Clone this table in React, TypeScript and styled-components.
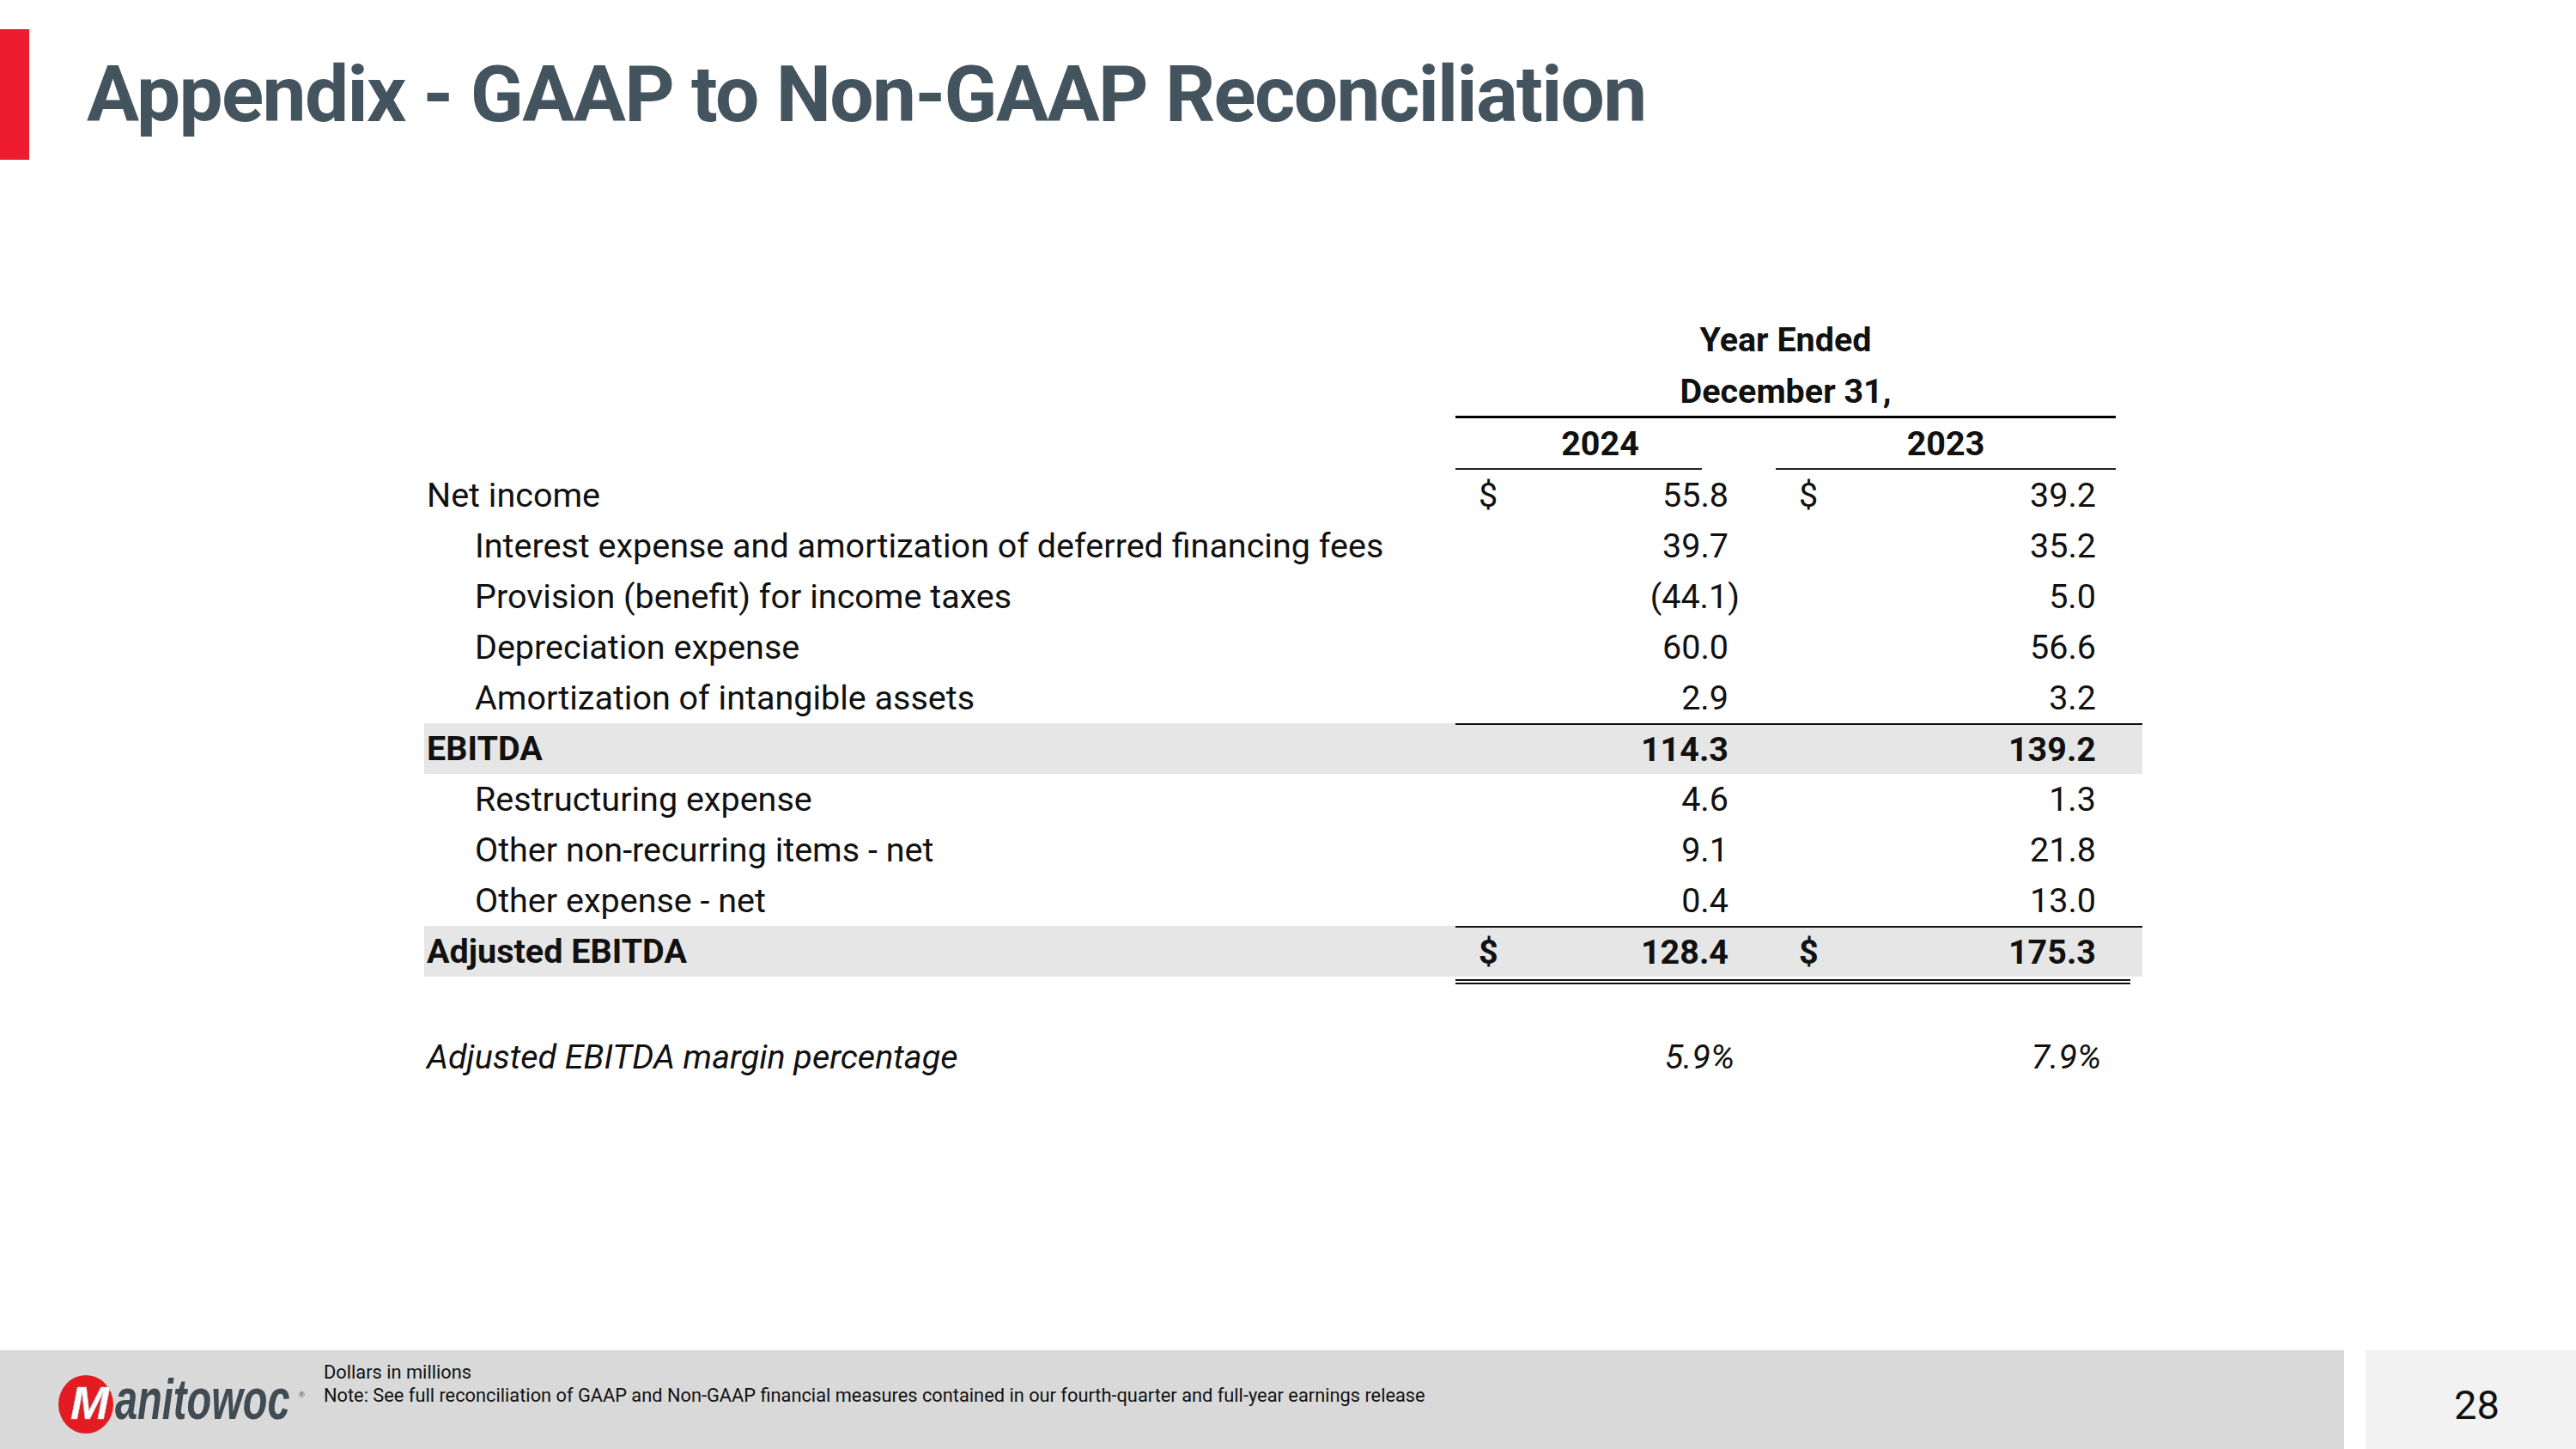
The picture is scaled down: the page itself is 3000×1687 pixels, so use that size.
import styled, {createGlobalStyle} from "styled-components";

const GlobalStyle = createGlobalStyle`
    html, body {
        margin: 0;
        padding: 0;
        background: #ffffff;
    }
`

const Slide = styled.div`
    width: 3000px;
    height: 1687px;
    display: flex;
    flex-direction: column;
    background: #ffffff;
    overflow: hidden;
    font-family: Roboto, "Liberation Sans", sans-serif;
`

const Header = styled.header`
    display: flex;
    align-items: center;
    height: 152px;
    margin-top: 34px;
`

const Accent = styled.div`
    width: 34px;
    align-self: stretch;
    background: #ed1c2e;
`

const Title = styled.h1`
    margin: 0 0 0 67px;
    font-size: 91px;
    line-height: 1;
    font-weight: 700;
    letter-spacing: -1.65px;
    color: #44545e;
    white-space: nowrap;
`

const Table = styled.div`
    width: 2001px;
    margin: 181px 0 0 494px;
    display: flex;
    flex-direction: column;
    color: #111111;
    font-size: 39.5px;
`

const HeadRow = styled.div`
    display: grid;
    grid-template-columns: 1201px 287px 86px 396px 31px;
    height: 60px;
    font-weight: 700;
`

const HeadSpan = styled.div<{ $rule?: boolean }>`
    grid-column: 2 / 5;
    display: flex;
    align-items: center;
    justify-content: center;
    border-bottom: ${p => p.$rule ? "3px solid #000" : "3px solid transparent"};
`

const YearCell = styled.div<{ $col: number; $shift: number }>`
    grid-column: ${p => p.$col};
    display: flex;
    align-items: center;
    justify-content: center;
    padding-left: ${p => p.$shift}px;
    border-bottom: 2px solid #222;
`

const Row = styled.div<{ $band?: boolean; $gap?: number }>`
    display: grid;
    grid-template-columns: 1201px 345px 455px;
    height: 59px;
    margin-top: ${p => p.$gap ?? 0}px;
    background: ${p => p.$band ? "#e6e6e6" : "transparent"};
`

const Label = styled.div<{ $indent?: boolean; $bold?: boolean; $italic?: boolean }>`
    display: flex;
    align-items: center;
    padding-left: ${p => p.$indent ? 59 : 3}px;
    font-weight: ${p => p.$bold ? 700 : 400};
    font-style: ${p => p.$italic ? "italic" : "normal"};
    white-space: nowrap;
`

const Amount = styled.div<{ $left: number; $right: number; $bold?: boolean; $italic?: boolean; $rule?: boolean; $double?: boolean; $trim?: number }>`
    position: relative;
    display: flex;
    align-items: center;
    justify-content: space-between;
    padding: 0 ${p => p.$right}px 0 ${p => p.$left}px;
    font-weight: ${p => p.$bold ? 700 : 400};
    font-style: ${p => p.$italic ? "italic" : "normal"};
    border-top: ${p => p.$rule ? "2px solid #111" : "none"};

    &::after {
        content: "";
        display: ${p => p.$double ? "block" : "none"};
        position: absolute;
        left: 0;
        right: ${p => p.$trim ?? 0}px;
        bottom: -9px;
        height: 2px;
        border-top: 2px solid #111;
        border-bottom: 2px solid #111;
    }
`

const Hang = styled.span<{ $by: number }>`
    margin-right: ${p => -p.$by}px;
`

const Footer = styled.footer`
    margin-top: auto;
    height: 115px;
    display: flex;
`

const FooterBar = styled.div`
    flex: 0 0 2730px;
    display: flex;
    align-items: flex-start;
    background: #d9d9d9;
`

const Logo = styled.svg`
    margin: 17px 0 0 60px;
    flex: none;
`

const Notes = styled.div`
    margin: 12px 0 0 7px;
    font-size: 21.8px;
    line-height: 27px;
    color: #111111;
    white-space: nowrap;
`

const PageBox = styled.div`
    flex: 1;
    margin-left: 25px;
    display: flex;
    align-items: center;
    justify-content: center;
    background: #f2f2f2;
    font-size: 47px;
    color: #111111;
    padding: 12px 0 0 14px;
`

type Line = {
    label: string
    a: string
    b: string
    dollar?: boolean
    indent?: boolean
    bold?: boolean
    band?: boolean
    rule?: boolean
    double?: boolean
}

const lines: Line[] = [
    {label: "Net income", a: "55.8", b: "39.2", dollar: true},
    {label: "Interest expense and amortization of deferred financing fees", a: "39.7", b: "35.2", indent: true},
    {label: "Provision (benefit) for income taxes", a: "(44.1)", b: "5.0", indent: true},
    {label: "Depreciation expense", a: "60.0", b: "56.6", indent: true},
    {label: "Amortization of intangible assets", a: "2.9", b: "3.2", indent: true},
    {label: "EBITDA", a: "114.3", b: "139.2", bold: true, band: true, rule: true},
    {label: "Restructuring expense", a: "4.6", b: "1.3", indent: true},
    {label: "Other non-recurring items - net", a: "9.1", b: "21.8", indent: true},
    {label: "Other expense - net", a: "0.4", b: "13.0", indent: true},
    {label: "Adjusted EBITDA", a: "128.4", b: "175.3", dollar: true, bold: true, band: true, rule: true, double: true},
]

function Value({text}: { text: string }) {
    if (text.endsWith(")")) {
        return <span>{text.slice(0, -1)}<Hang $by={13}>)</Hang></span>
    }
    return <span>{text}</span>
}

function ManitowocLogo() {
    return (
        <Logo width="310" height="92" viewBox="0 -10 310 92">
            <ellipse cx="40" cy="36" rx="32" ry="34" fill="#e31b23"/>
            <text x="22" y="53" fill="#ffffff" stroke="#c9c9c9" strokeWidth="0.6" fontFamily="'Liberation Sans', Arial, sans-serif"
                  fontWeight="700" fontStyle="italic" fontSize="54">M</text>
            <g transform="scale(1 1.4)">
                <text x="74" y="37.9" fill="#404b53" fontFamily="'Liberation Sans', Arial, sans-serif"
                      fontWeight="700" fontStyle="italic" fontSize="47">anitowoc</text>
            </g>
            <text x="288" y="28" fill="#404b53" fontFamily="'Liberation Sans', Arial, sans-serif" fontSize="9">®</text>
        </Logo>
    )
}

export default function App() {
    return (
        <Slide>
            <GlobalStyle/>
            <Header>
                <Accent/>
                <Title>Appendix - GAAP to Non-GAAP Reconciliation</Title>
            </Header>

            <Table>
                <HeadRow>
                    <HeadSpan>Year Ended</HeadSpan>
                </HeadRow>
                <HeadRow>
                    <HeadSpan $rule>December 31,</HeadSpan>
                </HeadRow>
                <HeadRow>
                    <YearCell $col={2} $shift={50}>2024</YearCell>
                    <YearCell $col={4} $shift={0}>2023</YearCell>
                </HeadRow>

                {lines.map(line => (
                    <Row key={line.label} $band={line.band}>
                        <Label $indent={line.indent} $bold={line.bold}>{line.label}</Label>
                        <Amount $left={27} $right={27} $bold={line.bold} $rule={line.rule} $double={line.double}>
                            <span>{line.dollar ? "$" : ""}</span>
                            <Value text={line.a}/>
                        </Amount>
                        <Amount $left={55} $right={54} $bold={line.bold} $rule={line.rule} $double={line.double} $trim={14}>
                            <span>{line.dollar ? "$" : ""}</span>
                            <Value text={line.b}/>
                        </Amount>
                    </Row>
                ))}

                <Row $gap={64}>
                    <Label $italic>Adjusted EBITDA margin percentage</Label>
                    <Amount $left={27} $right={20} $italic>
                        <span/>
                        <span>5.9%</span>
                    </Amount>
                    <Amount $left={55} $right={48} $italic>
                        <span/>
                        <span>7.9%</span>
                    </Amount>
                </Row>
            </Table>

            <Footer>
                <FooterBar>
                    <ManitowocLogo/>
                    <Notes>
                        Dollars in millions<br/>
                        Note: See full reconciliation of GAAP and Non-GAAP financial measures contained in our fourth-quarter and full-year earnings release
                    </Notes>
                </FooterBar>
                <PageBox>28</PageBox>
            </Footer>
        </Slide>
    )
}
